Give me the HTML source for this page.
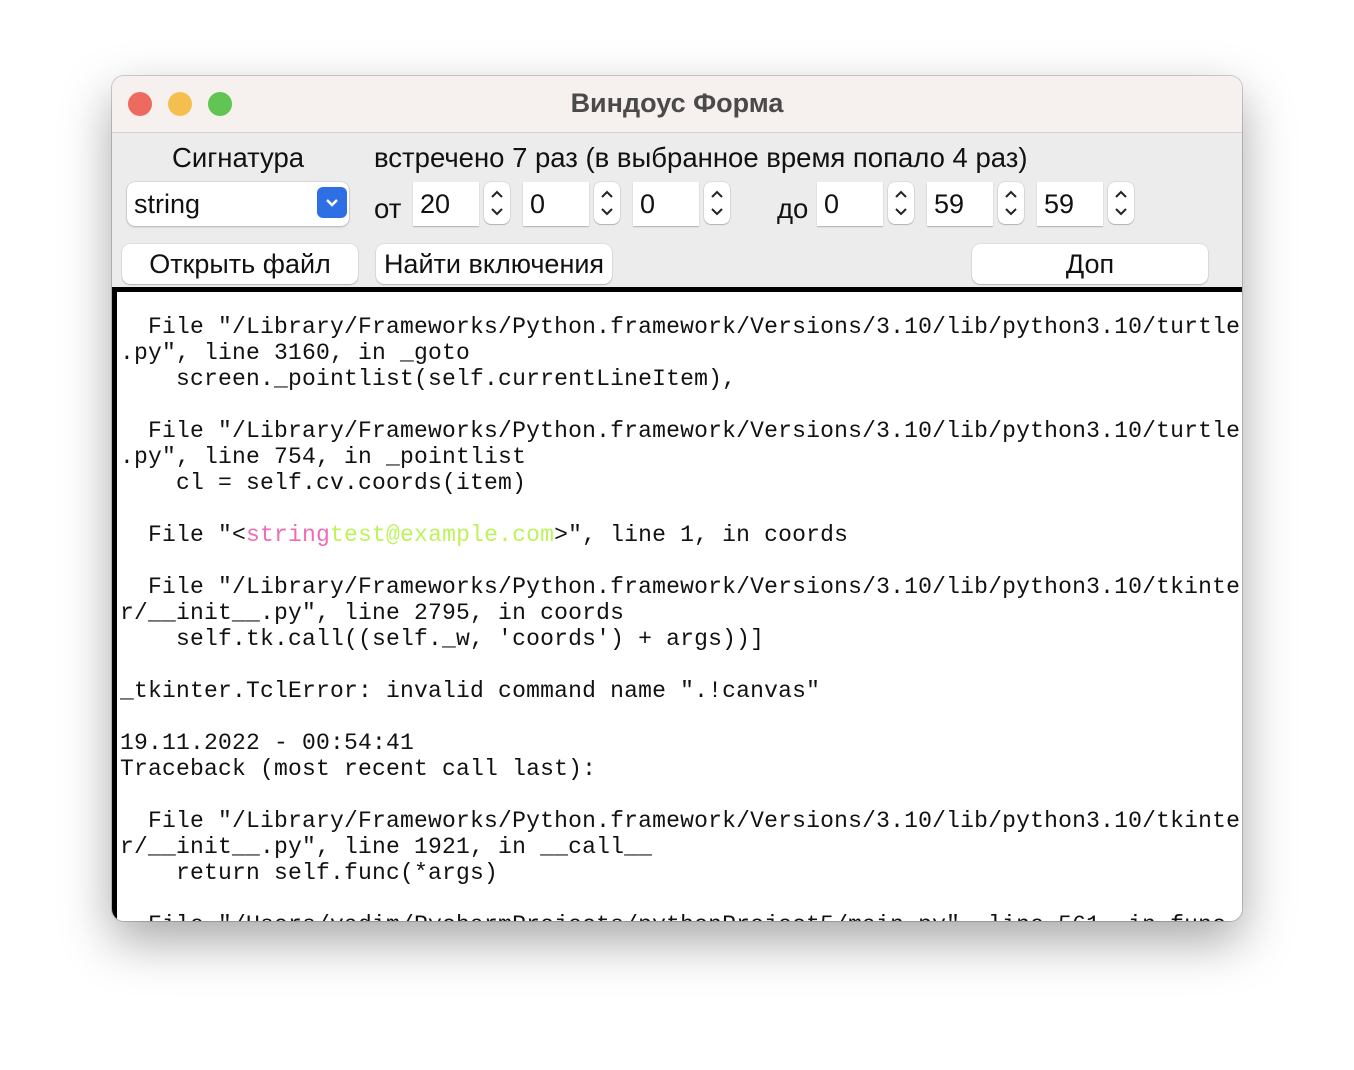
<!DOCTYPE html>
<html><head><meta charset="utf-8"><style>
body{margin:0;width:1354px;height:1070px;background:#fff;position:relative;overflow:hidden;font-family:"Liberation Sans","DejaVu Sans",sans-serif;}
.win{position:absolute;left:112px;top:76px;width:1130px;height:845px;border-radius:12px;overflow:hidden;background:#ececec;box-shadow:0 20px 50px rgba(0,0,0,.35),0 0 0 1px rgba(0,0,0,.18);}
.tb{position:absolute;left:0;top:0;width:100%;height:56px;background:#f6f1ee;border-bottom:1px solid #d4d0cd;}
.dot{position:absolute;top:16px;width:24px;height:24px;border-radius:50%;}
.title{position:absolute;left:0;right:0;top:12px;text-align:center;font-weight:bold;font-size:27px;color:#4a4a4a;}
.t{position:absolute;font-size:27.5px;color:#111;white-space:nowrap;}
.inp{position:absolute;top:106px;height:44px;background:#fff;box-shadow:0 1px 1px rgba(0,0,0,.25);font-size:27px;line-height:44px;padding-left:7px;box-sizing:border-box;color:#111;}
.spin{position:absolute;top:106px;width:26px;height:42px;background:#fff;border-radius:7px;box-shadow:0 0 1px rgba(0,0,0,.4),0 1px 1px rgba(0,0,0,.2);}
.btn{position:absolute;top:168px;height:40px;background:#fff;border-radius:8px;box-shadow:0 0 1px rgba(0,0,0,.35),0 1px 1px rgba(0,0,0,.2);font-size:27px;line-height:40px;text-align:center;color:#111;white-space:nowrap;}
.txt{position:absolute;left:0;top:211px;width:1130px;height:640px;background:#fff;border-top:5px solid #000;border-left:5px solid #000;box-sizing:border-box;}
pre{margin:0;padding:22px 0 0 3px;font-family:"Liberation Mono","DejaVu Sans Mono",monospace;font-size:23px;line-height:26px;color:#111;letter-spacing:0.2px;}
.p{color:#ef6cb3}.g{color:#bef35c}
</style></head><body>
<div class="win">
 <div class="tb">
  <div class="dot" style="left:16px;background:#ec6a5e;"></div>
  <div class="dot" style="left:56px;background:#f4bf4f;"></div>
  <div class="dot" style="left:96px;background:#61c554;"></div>
  <div class="title">Виндоус Форма</div>
 </div>
 <div class="t" style="left:60px;top:66px;">Сигнатура</div>
 <div class="t" style="left:262px;top:66px;">встречено 7 раз (в выбранное время попало 4 раз)</div>
 <div class="inp" style="left:15px;width:222px;border-radius:8px;box-shadow:0 0 1px rgba(0,0,0,.4),0 1px 2px rgba(0,0,0,.2);">string</div>
 <div style="position:absolute;left:205px;top:111px;width:30px;height:31px;background:#2f6fe4;border-radius:6px;"><svg width="30" height="31"><path d="M10 13l5 5 5-5" stroke="#fff" stroke-width="2.5" fill="none"/></svg></div>
 <div class="t" style="left:262px;top:117px;">от</div>
 <div class="inp" style="left:301px;width:66px;">20</div>
 <div class="spin" style="left:372px;"><svg width="26" height="42"><path d="M8 15l5-5 5 5M8 27l5 5 5-5" stroke="#222" stroke-width="2" fill="none"/></svg></div>
 <div class="inp" style="left:411px;width:66px;">0</div>
 <div class="spin" style="left:482px;"><svg width="26" height="42"><path d="M8 15l5-5 5 5M8 27l5 5 5-5" stroke="#222" stroke-width="2" fill="none"/></svg></div>
 <div class="inp" style="left:521px;width:66px;">0</div>
 <div class="spin" style="left:592px;"><svg width="26" height="42"><path d="M8 15l5-5 5 5M8 27l5 5 5-5" stroke="#222" stroke-width="2" fill="none"/></svg></div>
 <div class="t" style="left:665px;top:117px;">до</div>
 <div class="inp" style="left:705px;width:66px;">0</div>
 <div class="spin" style="left:776px;"><svg width="26" height="42"><path d="M8 15l5-5 5 5M8 27l5 5 5-5" stroke="#222" stroke-width="2" fill="none"/></svg></div>
 <div class="inp" style="left:815px;width:66px;">59</div>
 <div class="spin" style="left:886px;"><svg width="26" height="42"><path d="M8 15l5-5 5 5M8 27l5 5 5-5" stroke="#222" stroke-width="2" fill="none"/></svg></div>
 <div class="inp" style="left:925px;width:66px;">59</div>
 <div class="spin" style="left:996px;"><svg width="26" height="42"><path d="M8 15l5-5 5 5M8 27l5 5 5-5" stroke="#222" stroke-width="2" fill="none"/></svg></div>
 <div class="btn" style="left:10px;width:236px;">Открыть файл</div>
 <div class="btn" style="left:264px;width:236px;">Найти включения</div>
 <div class="btn" style="left:860px;width:236px;">Доп</div>
 <div class="txt"><pre>  File "/Library/Frameworks/Python.framework/Versions/3.10/lib/python3.10/turtle
.py", line 3160, in _goto
    screen._pointlist(self.currentLineItem),

  File "/Library/Frameworks/Python.framework/Versions/3.10/lib/python3.10/turtle
.py", line 754, in _pointlist
    cl = self.cv.coords(item)

  File "&lt;<span class="p">string</span><span class="g">test@example.com</span>&gt;", line 1, in coords

  File "/Library/Frameworks/Python.framework/Versions/3.10/lib/python3.10/tkinte
r/__init__.py", line 2795, in coords
    self.tk.call((self._w, 'coords') + args))]

_tkinter.TclError: invalid command name ".!canvas"

19.11.2022 - 00:54:41
Traceback (most recent call last):

  File "/Library/Frameworks/Python.framework/Versions/3.10/lib/python3.10/tkinte
r/__init__.py", line 1921, in __call__
    return self.func(*args)

  File "/Users/vadim/PycharmProjects/pythonProject5/main.py", line 561, in func
</pre></div>
</div>
</body></html>
